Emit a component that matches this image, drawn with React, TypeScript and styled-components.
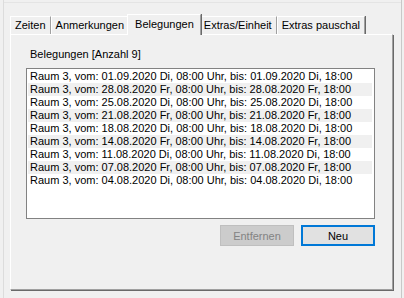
import styled, { createGlobalStyle } from 'styled-components';

const GlobalStyle = createGlobalStyle`
  html, body {
    margin: 0;
    padding: 0;
    background: #f0f0f0;
  }
  body {
    font-family: "Liberation Sans", Arial, sans-serif;
    font-size: 11px;
    color: #000;
  }
`;

const tabs = ['Zeiten', 'Anmerkungen', 'Belegungen', 'Extras/Einheit', 'Extras pauschal'];

const entries = [
  ['01.09.2020 Di', '01.09.2020 Di'],
  ['28.08.2020 Fr', '28.08.2020 Fr'],
  ['25.08.2020 Di', '25.08.2020 Di'],
  ['21.08.2020 Fr', '21.08.2020 Fr'],
  ['18.08.2020 Di', '18.08.2020 Di'],
  ['14.08.2020 Fr', '14.08.2020 Fr'],
  ['11.08.2020 Di', '11.08.2020 Di'],
  ['07.08.2020 Fr', '07.08.2020 Fr'],
  ['04.08.2020 Di', '04.08.2020 Di'],
];

const App = () => {
  return (
    <>
      <GlobalStyle />
      <Window>
        <TabControl>
          <TabStrip>
            {tabs.map((t) => (
              <Tab key={t} $active={t === 'Belegungen'}>
                {t}
              </Tab>
            ))}
          </TabStrip>
          <Panel>
            <Caption>Belegungen [Anzahl {entries.length}]</Caption>
            <ListBox>
              {entries.map(([from, to], i) => (
                <Row key={i} $odd={i % 2 === 1}>
                  Raum 3, vom: {from}, 08:00 Uhr, bis: {to}, 18:00
                </Row>
              ))}
            </ListBox>
            <ButtonBar>
              <Button disabled>Entfernen</Button>
              <Button $default>Neu</Button>
            </ButtonBar>
          </Panel>
        </TabControl>
      </Window>
    </>
  );
};

export default App;

const Window = styled.div`
  width: 404px;
  height: 298px;
  box-sizing: border-box;
  padding: 14px 10px 0 10px;
  box-shadow: inset 3px 0 0 #f0f0f0, inset 4px 0 0 #dcdcdc, inset -2px 0 0 #f0f0f0,
    inset -3px 0 0 #c8c8c8, inset 0 2px 0 #f0f0f0, inset 0 3px 0 #e4e4e4;
  overflow: hidden;
`;

const TabControl = styled.div`
  display: flex;
  flex-direction: column;
  width: 383px;
`;

const TabStrip = styled.div`
  display: flex;
  align-items: flex-end;
  height: 20px;
  position: relative;
  z-index: 1;
`;

const Tab = styled.div<{ $active?: boolean }>`
  box-sizing: border-box;
  height: ${({ $active }) => ($active ? '21px' : '18px')};
  margin: ${({ $active }) => ($active ? '0 -2px -1px' : '0')};
  padding: ${({ $active }) => ($active ? '3px 6px 0 7px' : '2px 4px 0 4px')};
  background: #f0f0f0;
  border-top: 1px solid #fff;
  border-left: 1px solid #fff;
  border-right: 1px solid #a0a0a0;
  box-shadow: 1px 0 0 #696969;
  white-space: nowrap;
  line-height: 13px;
  position: relative;
  z-index: ${({ $active }) => ($active ? 2 : 1)};
`;

const Panel = styled.div`
  box-sizing: border-box;
  height: 256px;
  padding: 13px 17px 0 15px;
  background: #f0f0f0;
  border-top: 1px solid #fff;
  border-left: 1px solid #fff;
  border-right: 1px solid #a0a0a0;
  border-bottom: 1px solid #a0a0a0;
  box-shadow: 1px 1px 0 #696969;
  display: flex;
  flex-direction: column;
`;

const Caption = styled.div`
  padding-left: 4px;
  line-height: 13px;
  margin-bottom: 7px;
`;

const ListBox = styled.div`
  box-sizing: border-box;
  height: 151px;
  background: #fff;
  border: 1px solid #828282;
  padding: 1px 2px 0 1px;
  display: flex;
  flex-direction: column;
`;

const Row = styled.div<{ $odd?: boolean }>`
  height: 13px;
  line-height: 13px;
  padding-left: 2px;
  white-space: nowrap;
  background: ${({ $odd }) => ($odd ? '#f0f0f0' : '#fff')};
`;

const ButtonBar = styled.div`
  display: flex;
  justify-content: flex-end;
  gap: 7px;
  margin-top: 6px;
`;

const Button = styled.button<{ $default?: boolean }>`
  box-sizing: border-box;
  width: 74px;
  height: 21px;
  padding: 0;
  font-family: "Liberation Sans", Arial, sans-serif;
  font-size: 11px;
  color: #000;
  background: #e1e1e1;
  border: ${({ $default }) => ($default ? '2px solid #0078d7' : '1px solid #adadad')};
  &:disabled {
    color: #838383;
    background: #cccccc;
    border-color: #bfbfbf;
  }
`;
